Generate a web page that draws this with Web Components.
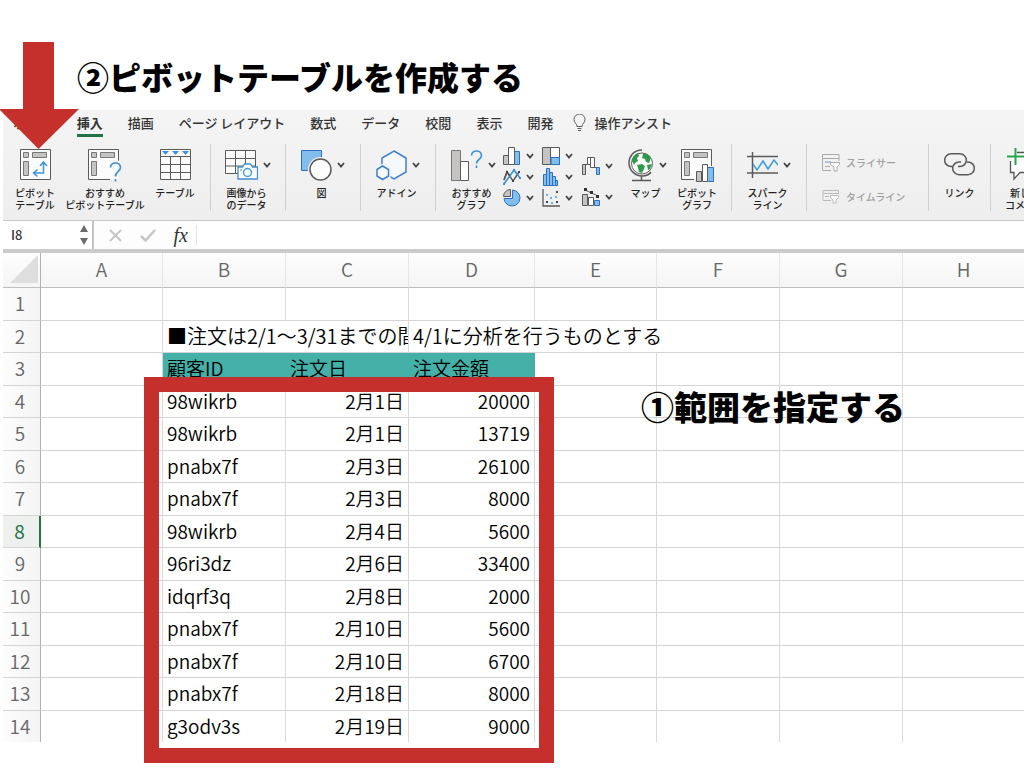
<!DOCTYPE html>
<html lang="ja">
<head>
<meta charset="utf-8">
<title>ピボットテーブルを作成する</title>
<style>
  body { margin: 0; background: #fff; font-family: "Noto Sans CJK JP", "Noto Sans", sans-serif; color: #111; }
</style>
</head>
<body>
<pivot-guide></pivot-guide>
<script>
const G = '#5a5a5a', B = '#2f6fc0', LB = '#83bdec', GR = '#c6c4c2';
const svg = (w, h, body) => `<svg width="${w}" height="${h}" viewBox="0 0 ${w} ${h}" fill="none" stroke="${G}" aria-hidden="true">${body}</svg>`;
const fields = `<path fill="${GR}" stroke="#777" d="M3.5 3.5h5v5h-5zM12.5 3.5h14v5h-14zM3.5 12.5h5v14h-5z"/>`;
const ICONS = {
  pivot: svg(31, 32, `<path fill="#fcfcfc" d="M.5 .5h30v30H.5z"/>${fields}
    <g stroke="#3f93d6" stroke-width="1.5"><path d="M23.5 13.5v10.5h-9.500M20 17l3.500-4 3.500 4M17.500 20.500l-4 3.500 4 3.500"/></g>`),
  pivotHint: svg(34, 34, `<path fill="#fcfcfc" stroke="none" d="M.5 1.5h30v30H.5z"/><path d="M30.500 14V1.500H.5v30H22"/><g transform="translate(0 1)">${fields}</g>
    <path stroke="#f3f3f3" stroke-width="5" d="M23 19c0-6 9-6 9 0 0 4-5 4-5 9"/>
    <path stroke="#3f93d6" stroke-width="1.700" d="M22.500 19.500c0-6 10-6 10 0 0 4-5 4-5 9M27.500 31v2.500"/>`),
  table: svg(31, 32, `<path fill="#fcfcfc" d="M.5 .5h30v30H.5zM.5 7.500h30M.5 15.500h30M.5 23.500h30M10.500 7v23.500M20.500 7v23.500"/>
    <path fill="#3f8fd8" stroke="none" d="M2 2h7L5.500 6zM12 2h7l-3.500 4zM22 2h7l-3.500 4z"/>`),
  picture: svg(33, 30, `<path fill="#fcfcfc" d="M.5 .5h30v23H.5zM.5 8.500h30M.5 16h30M10.500 .5v23M20.500 .5v23"/>
    <path fill="#fff" stroke="#3f8fd0" stroke-width="1.300" d="M13 17h4.500l2-3h6l2 3h5v12H13z"/>
    <circle cx="22.500" cy="22.500" r="4" stroke="#3fa0e0" stroke-width="1.500"/><path stroke="#3f8fd0" d="M15 20h2"/>`),
  shapes: svg(31, 31, `<path fill="${LB}" stroke="${B}" d="M.5 .5h20v20H.5z"/><circle cx="19.500" cy="19.500" r="12.500" fill="#f3f3f3" stroke="none"/>
    <circle cx="19.500" cy="19.500" r="10.500" fill="#fcfcfc" stroke-width="1.500"/>`),
  addin: svg(31, 31, `<g stroke="#3f80c8" stroke-width="1.500" fill="#f6f9fc"><path d="M18 1l12 7v14l-12 7L6 22V8z"/>
    <path stroke="#f3f3f3" stroke-width="4" d="M6.500 16l6 3.500v7l-6 3.500-6-3.500v-7z"/><path d="M6.500 16l6 3.500v6.500l-6 3.500-5.500-3.500v-6.500z"/></g>`),
  chartHint: svg(32, 31, `<path fill="${GR}" stroke="#777" d="M.5 .5h9v30h-9z"/><path fill="#fff" d="M9.500 11.500h8v19h-8z"/>
    <path stroke="#3f93d6" stroke-width="1.700" d="M20.500 5.500c0-6 10-6 10 0 0 4-5 4-5 8M25.500 15.500v2.500"/>`),
  bars: svg(18, 18, `<path fill="${GR}" d="M.5 8.500h5v9h-5z"/><path fill="${LB}" stroke="${B}" d="M11.500 4.500h5v13h-5z"/><path fill="#fff" d="M5.500 .5h6v17h-6z"/>`),
  line: svg(18, 18, `<path stroke-width="1.500" d="M1 12L4 4l6 9 6-9"/><path stroke="#3b93d4" stroke-width="1.700" d="M1 16L11 2l6 8"/><path stroke-width="1.500" d="M1 12L4 4l3 4"/>
    <path fill="#444" stroke="none" d="M3 3h2v2H3zM9 12h2v2H9zM15 3h2v2h-2z"/><path fill="#3b93d4" stroke="none" d="M0 15h2v2H0zM10 1h2v2h-2zM16 9h2v2h-2z"/>`),
  pie: svg(18, 18, `<path fill="${LB}" stroke="${B}" d="M9.500 1v8.500H1a8 8 0 1 0 8.500-8.500z"/><path fill="${GR}" d="M7.500 .5v7H.5a7 7 0 0 1 7-7z"/>`),
  tree: svg(18, 18, `<path fill="#fff" d="M8.500 .5h9v17h-9z"/><path fill="${GR}" d="M.5 .5h8v17h-8z"/><path fill="${LB}" stroke="${B}" d="M9 10.500h8.500v7H9z"/>`),
  histogram: svg(18, 18, `<path fill="${LB}" stroke="${B}" d="M1.500 6.500h3v11h-3zM4.500 .5h3v17h-3zM7.500 4.500h3v13h-3zM10.500 8.500h3v9h-3zM13.500 12.500h2v5h-2z"/>`),
  scatter: svg(18, 18, `<path stroke-width="1.300" d="M1 0v17h17"/><path fill="#444" stroke="none" d="M4 12h2v2H4zM14 2h2v2h-2zM14 12h2v2h-2z"/>
    <path fill="#6cb2e8" stroke="none" d="M4 5h2v2H4zM8 8h2v2H8zM13 7h2v2h-2zM9 13h2v2H9z"/>`),
  waterfall: svg(18, 18, `<path fill="${GR}" d="M.5 17.500v-10h3v10z"/><path fill="#fff" d="M5.500 7.500v-7h3v7zM8.500 .5h4v10h-4z"/><path d="M3 7.500h3M12 10.500h3"/><path fill="${LB}" stroke="${B}" d="M14.500 10.500h3v7h-3z"/>`),
  combo: svg(18, 18, `<path fill="${GR}" d="M.5 6.500h5v11h-5z"/><path fill="#fff" d="M6.500 9.500h5v8h-5z"/><path fill="${LB}" stroke="${B}" d="M12.500 12.500h5v5h-5z"/>
    <path d="M3 2l13 6"/><path fill="#333" stroke="none" d="M2 0h3v3H2zM8 3h3v3H8zM14 7h3v3h-3z"/>`),
  globe: svg(26, 33, `<circle cx="14" cy="14.500" r="10.500" fill="#fff"/>
    <path fill="#2f9a4c" stroke="none" d="M4 12c0-4 3-7 6-8l1 3-2 2 1 3-3 2-1 2zM15 5c3-1 7 1 8 4l-2 5-3-1-1-3-3-1zM9 16l5-1 3 2-1 3-2 4-3-1-1-4zM19 16l5-1-2 5-2 1z"/>
    <path stroke-width="1.500" d="M14 1C5 1 1 8 1 14c0 7 6 13 13 13 4 0 7-1 9-4M13.500 27v4M4 31.500h19"/>`),
  pivotChart: svg(33, 33, `<path fill="#fcfcfc" stroke="none" d="M.5 .5h30v30H.5z"/><path d="M30.500 17V.5H.5v30H13"/>${fields}
    <path fill="${GR}" d="M15.500 22.500h5v10h-5z"/><path fill="${LB}" stroke="${B}" d="M26.500 18.500h6v14h-6z"/><path fill="#fff" d="M21.500 15.500h5v17h-5z"/>`),
  spark: svg(31, 27, `<path stroke-width="1.500" d="M0 4.500h31M0 21h31M5.500 0v26"/><path stroke="#3f9bdc" stroke-width="1.500" d="M6 12l4 6 6-9 5 8 6-9 4 5"/>`),
  slicer: svg(18, 18, `<g stroke="#aaa"><path d="M17 7V.5H.5v16H9M.5 4.500H17M3 8.500h5M3 12.500h5"/><path stroke="#a9c8e4" stroke-width="2" d="M3 8h6"/><path fill="#fff" d="M8.500 8.500h9v2L15 13v4h-3v-4l-3.500-2.500z"/></g>`),
  timeline: svg(18, 18, `<g stroke="#bbb"><path d="M16.500 6V2.500H1v10h8M1 5.500h15.500M3 8.500h4"/><path fill="#fff" d="M8.500 7.500h8v2L14 12v3h-3v-3L8.500 9.500z"/></g>`),
  link: svg(31, 24, `<g stroke-width="1.500"><path d="M8 13.500H7A6.300 6.300 0 0 1 7 .8h9a6.300 6.300 0 0 1 0 12.700h-2"/><path d="M23 9h1a6.300 6.300 0 0 1 0 12.700h-9A6.300 6.300 0 0 1 15 9h2"/></g>`),
  comment: svg(36, 34, `<path fill="#fff" stroke="#555" stroke-width="1.300" d="M10 4.500h25v20H13l-6 6.500v-6.500H3.500V13"/><path stroke="#25a84a" stroke-width="2" d="M8.500 0v17M0 8.500h17"/>`),
  chevron: svg(8, 6, `<path stroke="#444" stroke-width="1.800" d="M1 1l3 3.500L7 1"/>`),
  bulb: svg(13, 18, `<path d="M4 12.500c0-3-3-3.500-3-7a5.500 5.500 0 0 1 11 0c0 3.500-3 4-3 7zM4.500 14.500h4M5 16.500h3"/>`)
};

class Part extends HTMLElement {
  connectedCallback() {
    if (this.shadowRoot) return;
    this.attachShadow({ mode: 'open' }).innerHTML = this.render();
  }
}
const RESET = 'button{all:unset;box-sizing:border-box;cursor:default}button:focus-visible{outline:2px solid #217346}svg{display:block;flex:none}';

customElements.define('step-note', class extends Part {
  render() {
    return `<style>:host{display:block}
      h2{margin:0;font-size:var(--note-size,32px);line-height:40px;font-weight:900;color:#000;white-space:nowrap}
      </style><h2><slot></slot></h2>`;
  }
});

customElements.define('ribbon-tabs', class extends Part {
  render() {
    const tabs = ['ホーム', '挿入', '描画', 'ページ レイアウト', '数式', 'データ', '校閲', '表示', '開発'];
    return `<style>${RESET}
      :host{display:block;overflow:hidden}
      nav{display:flex;gap:25px;padding-left:10px;height:27px;font-size:13px;font-weight:500;line-height:20px;white-space:nowrap;color:#333}
      button{padding-top:2px;height:27px;border-bottom:3px solid transparent}
      .on{border-color:#217346;font-weight:700}
      .assist{display:flex;align-items:center;gap:8px;margin-left:-5px}
      </style><nav>${tabs.map(t => `<button${t === '挿入' ? ' class="on"' : ''}>${t}</button>`).join('')}
      <button class="assist">${ICONS.bulb}<span>操作アシスト</span></button></nav>`;
  }
});

customElements.define('ribbon-group', class extends Part {
  render() {
    return `<style>:host{display:flex;flex:none;box-sizing:border-box;height:67px;padding-top:3px;border-right:1px solid #d0d0d0}
      :host([last]){border:0}</style><slot></slot>`;
  }
});

customElements.define('ribbon-tool', class extends Part {
  render() {
    const menu = this.hasAttribute('menu');
    return `<style>${RESET}
      :host{display:block;flex:none;width:60px}
      button{display:flex;flex-direction:column;align-items:center;gap:4px;width:100%}
      .icon{display:flex;align-items:center;gap:5px;height:36px}
      .label{font-size:10px;line-height:12px;font-weight:500;text-align:center;white-space:nowrap;color:#222}
      .menu .label{padding-right:3px}
      </style><button${menu ? ' class="menu"' : ''}><span class="icon">${ICONS[this.getAttribute('icon')]}${menu ? ICONS.chevron : ''}</span>
      <span class="label"><slot></slot></span></button>`;
  }
});

customElements.define('chart-picker', class extends Part {
  render() {
    const col = (names, cls) => `<div class="${cls}">${names.map(([n, l]) => `<button aria-label="${l}">${ICONS[n]}${ICONS.chevron}</button>`).join('')}</div>`;
    return `<style>${RESET}
      :host{display:flex;flex:none}
      div{display:flex;flex-direction:column;gap:3px;width:39px}
      .short{gap:13px;padding:10px 0 0 1px;width:38px}
      button{display:flex;align-items:center;gap:5px}
      </style>${col([['bars', '縦棒'], ['line', '折れ線'], ['pie', '円']], 'full')}${col([['tree', '階層構造'], ['histogram', '統計'], ['scatter', '散布図']], 'full')}${col([['waterfall', 'ウォーターフォール'], ['combo', '組み合わせ']], 'short')}`;
  }
});

customElements.define('filter-tools', class extends Part {
  render() {
    return `<style>${RESET}
      :host{display:flex;flex:none;flex-direction:column;gap:16px;padding:7px 0 0 15px;width:106px}
      button{display:flex;align-items:center;gap:6px;height:18px;font-size:10px;line-height:18px;font-weight:500;color:#a0a0a0;white-space:nowrap}
      </style><button disabled>${ICONS.slicer}<span>スライサー</span></button><button disabled>${ICONS.timeline}<span>タイムライン</span></button>`;
  }
});

customElements.define('excel-ribbon', class extends Part {
  render() {
    return `<style>
      :host{display:block;background:linear-gradient(#f4f4f4,#eeeeee);border-bottom:1px solid #c8c8c8}
      .panel{display:flex;padding:7px 0 9px;overflow:hidden}
      .first{padding-left:2px;padding-right:5px}
      .single ribbon-tool{width:74px}
      .charts{padding-left:7px;padding-right:11px}
      .map{width:54px}.pc{width:46px}.link{width:61px}.comment{width:68px}
      .wide{width:80px}
      </style>
      <ribbon-tabs></ribbon-tabs>
      <div class="panel">
        <ribbon-group class="first">
          <ribbon-tool icon="pivot">ピボット<br>テーブル</ribbon-tool>
          <ribbon-tool class="wide" icon="pivotHint">おすすめ<br>ピボットテーブル</ribbon-tool>
          <ribbon-tool icon="table">テーブル</ribbon-tool>
        </ribbon-group>
        <ribbon-group class="single"><ribbon-tool icon="picture" menu>画像から<br>のデータ</ribbon-tool></ribbon-group>
        <ribbon-group class="single"><ribbon-tool icon="shapes" menu>図</ribbon-tool></ribbon-group>
        <ribbon-group class="single"><ribbon-tool icon="addin" menu>アドイン</ribbon-tool></ribbon-group>
        <ribbon-group class="charts">
          <ribbon-tool icon="chartHint" menu>おすすめ<br>グラフ</ribbon-tool>
          <chart-picker></chart-picker>
          <ribbon-tool class="map" icon="globe" menu>マップ</ribbon-tool>
          <ribbon-tool class="pc" icon="pivotChart">ピボット<br>グラフ</ribbon-tool>
        </ribbon-group>
        <ribbon-group class="single"><ribbon-tool icon="spark" menu>スパーク<br>ライン</ribbon-tool></ribbon-group>
        <ribbon-group><filter-tools></filter-tools></ribbon-group>
        <ribbon-group><ribbon-tool class="link" icon="link">リンク</ribbon-tool></ribbon-group>
        <ribbon-group last><ribbon-tool class="comment" icon="comment">新しい<br>コメント</ribbon-tool></ribbon-group>
      </div>`;
  }
});

customElements.define('formula-bar', class extends Part {
  render() {
    return `<style>${RESET}
      :host{display:flex;align-items:center;height:28px;background:#fdfdfd;border-bottom:4px solid #cbcbcb}
      input{border:0;outline:0;background:transparent;font:500 13px/20px "Noto Sans CJK JP",sans-serif;color:#333;padding:0;min-width:0}
      .name{display:flex;align-items:center;box-sizing:border-box;width:91px;height:28px;padding:0 4px 0 8px;background:#fff;border-right:2px solid #c4c4c4}
      .name input{flex:1}
      .tools{display:flex;align-items:center;justify-content:space-between;box-sizing:border-box;width:103px;height:20px;padding:0 8px 0 15px;border-right:1px solid #e2e2e2}
      .fx{font:italic 20px/20px "Liberation Serif",serif;color:#333}
      .formula{flex:1;background:#fff;height:28px}
      </style>
      <div class="name"><input aria-label="名前ボックス" value="I8">
        <button aria-label="セルの選択"><svg width="8" height="20" viewBox="0 0 8 20" fill="#6b6b6b"><path d="M4 0l4 7H0zM4 20l4-7H0z"/></svg></button></div>
      <div class="tools">
        <button aria-label="キャンセル"><svg width="13" height="13" viewBox="0 0 13 13" stroke="#c6c6c6" stroke-width="2"><path d="M1 1l11 11M12 1L1 12"/></svg></button>
        <button aria-label="入力"><svg width="16" height="13" viewBox="0 0 16 13" fill="none" stroke="#c6c6c6" stroke-width="2.500"><path d="M1 7l4.500 4.500L15 1"/></svg></button>
        <button class="fx" aria-label="関数の挿入">fx</button></div>
      <input class="formula" aria-label="数式">`;
  }
});

customElements.define('sheet-grid', class extends Part {
  render() {
    const data = [['98wikrb', '2月1日', '20000'], ['98wikrb', '2月1日', '13719'], ['pnabx7f', '2月3日', '26100'], ['pnabx7f', '2月3日', '8000'],
      ['98wikrb', '2月4日', '5600'], ['96ri3dz', '2月6日', '33400'], ['idqrf3q', '2月8日', '2000'], ['pnabx7f', '2月10日', '5600'],
      ['pnabx7f', '2月10日', '6700'], ['pnabx7f', '2月18日', '8000'], ['g3odv3s', '2月19日', '9000']];
    const blank = n => '<td></td>'.repeat(n);
    const body = data.map(([a, b, c], i) => {
      const r = i + 4, on = r === 8;
      return `<tr><th scope="row"${on ? ' class="on"' : ''}>${r}</th><td></td><td>${a}</td><td class="n">${b}</td><td class="n">${c}</td>${blank(4)}<td${on ? ' class="cursor"' : ''}></td></tr>`;
    }).join('');
    return `<style>
      :host{display:block;overflow:hidden}
      table{table-layout:fixed;border-collapse:separate;border-spacing:0;width:calc(100% + 120px);font-size:19px;line-height:28px}
      .rows{width:38px}.w1{width:122px}.w2{width:123px}.w3{width:126px}
      th,td{box-sizing:border-box;padding:0 4px 2px;overflow:hidden;white-space:nowrap;font-weight:350;text-align:left;border-right:1px solid #d9d9d9;border-bottom:1px solid #d4d4d4}
      td{color:#000}
      thead th{height:35px;text-align:center;color:#666;background:linear-gradient(#fdfdfd,#f5f5f5);border-right-color:#e6e6e6;border-bottom-color:#bfbfbf}
      thead .corner,tbody th{border-right-color:#b0b0b0}
      .corner svg{display:block;margin-left:3px}
      tbody tr{height:32px}
      tbody tr:nth-child(odd){height:33px}
      tbody th{padding:0 3px 2px 0;text-align:center;color:#666;background:linear-gradient(90deg,#fdfdfd,#f4f4f4)}
      tbody tr:last-child{height:31px}
      tbody tr:last-child>*{border-bottom:0}
      .n{text-align:right}
      .note td{font-size:20px}
      .head td:nth-child(n+3):nth-child(-n+5){background:#44b0a8;border-color:#44b0a8}
      tbody .on{color:#217346;font-weight:400;background:#eef0ee;border-right:2px solid #217346}
      .cursor{box-shadow:0 0 0 1px #444}
      </style>
      <table><colgroup><col class="rows"><col class="w1"><col class="w2"><col class="w2"><col class="w3"><col class="w1"><col class="w2"><col class="w2"><col class="w1"><col></colgroup>
      <thead><tr><th class="corner"><svg width="28" height="28" viewBox="0 0 28 28"><path fill="#dedede" d="M28 0v28H0z"/></svg></th>${'ABCDEFGH'.split('').map(c => `<th scope="col">${c}</th>`).join('')}<th scope="col"></th></tr></thead>
      <tbody><tr><th scope="row">1</th>${blank(9)}</tr>
      <tr class="note"><th scope="row">2</th><td></td><td colspan="2">■注文は2/1〜3/31までの間</td><td colspan="3">4/1に分析を行うものとする</td>${blank(3)}</tr>
      <tr class="head"><th scope="row">3</th><td></td><td>顧客ID</td><td>注文日</td><td>注文金額</td>${blank(5)}</tr>${body}</tbody></table>`;
  }
});

customElements.define('red-arrow', class extends Part {
  render() {
    return `<style>:host{display:block}svg{display:block}</style>
      <svg width="79" height="108" viewBox="0 0 79 108" aria-hidden="true"><path fill="#c5302c" d="M23 0h31v67h25L38.500 107-1 67h24z"/></svg>`;
  }
});

customElements.define('pivot-guide', class extends Part {
  render() {
    return `<style>
      :host{display:block;position:relative;overflow:hidden;padding-bottom:26px}
      header{padding:56px 0 14px 77px}
      .app{margin-left:3px}
      red-arrow{position:absolute;left:0;top:42px}
      .frame{position:absolute;left:144px;top:377px;width:380px;height:356px;border:15px solid #c5302c}
      .range{position:absolute;left:641px;top:386px;--note-size:33px}
      </style>
      <header><step-note>②ピボットテーブルを作成する</step-note></header>
      <div class="app"><excel-ribbon></excel-ribbon><formula-bar></formula-bar><sheet-grid></sheet-grid></div>
      <red-arrow></red-arrow><div class="frame"></div><step-note class="range">①範囲を指定する</step-note>`;
  }
});
</script>
</body>
</html>
